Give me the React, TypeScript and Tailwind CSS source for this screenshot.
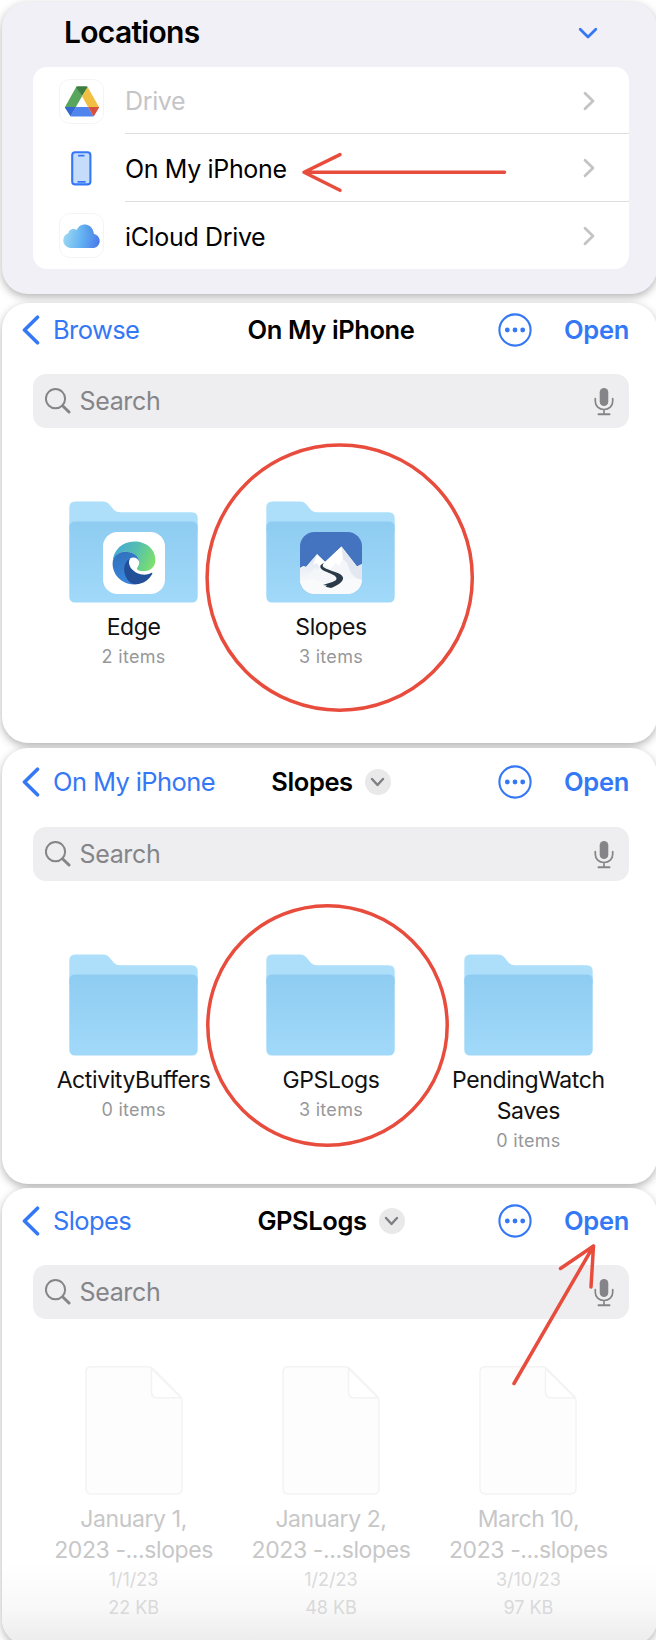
import React from "react";

const RED = "#e84c3d";
const BLUE = "#3478f6";

function BackChevron() {
  return (
    <svg width="18" height="30" viewBox="0 0 18 30" fill="none" stroke={BLUE} strokeWidth="3.6" strokeLinecap="round" strokeLinejoin="round">
      <path d="M15.500 2.200 2.500 15l13 12.800" />
    </svg>
  );
}

function Disclosure() {
  return (
    <svg width="12" height="20" viewBox="0 0 12 20" fill="none" stroke="#c4c4c6" strokeWidth="2.8" strokeLinecap="round" strokeLinejoin="round">
      <path d="M2 2.2 10 10l-8 7.8" />
    </svg>
  );
}

function MoreButton() {
  return (
    <svg width="34" height="34" viewBox="0 0 34 34" fill="none">
      <circle cx="17" cy="17" r="15.6" stroke={BLUE} strokeWidth="2.1" />
      <circle cx="9.3" cy="17" r="2.4" fill={BLUE} />
      <circle cx="17" cy="17" r="2.4" fill={BLUE} />
      <circle cx="24.7" cy="17" r="2.4" fill={BLUE} />
    </svg>
  );
}

function DriveIcon() {
  return (
    <svg width="34" height="31" viewBox="0 0 34 31">
      <path d="M11.6 0.3 17 10.2 5.6 30.2 0 20.9Z" fill="#58a55c" />
      <path d="M11.2 1.2Q11.7 0.3 12.7 0.3H21.3Q22.3 0.3 22.8 1.2L17 10.2Z" fill="#3c7e41" />
      <path d="M22.6 0.9 34 20.9H23.1L17 10.2Z" fill="#f1bf42" />
      <path d="M0 20.9H10.9L5.6 30.2 0.2 21.9Z" fill="#3567d6" />
      <path d="M10.9 20.9H23.1L28.4 30.2Q28 30.6 27.2 30.6H6.8Q6 30.6 5.6 30.2Z" fill="#5085ed" />
      <path d="M23.1 20.9H34Q34 21.7 33.6 22.3L29.4 29.4Q29 30 28.4 30.2Z" fill="#d85040" />
    </svg>
  );
}

function PhoneIcon() {
  return (
    <svg width="21" height="35" viewBox="0 0 21 35">
      <rect x="1.2" y="1.2" width="18.2" height="32.2" rx="3" fill="#c6dcfb" stroke={BLUE} strokeWidth="2.1" />
      <path d="M7.8 4.7h5M7.2 30.8h6.8" stroke={BLUE} strokeWidth="1.7" strokeLinecap="round" />
    </svg>
  );
}

function CloudIcon() {
  return (
    <svg width="37" height="24" viewBox="0 0 37 24">
      <defs>
        <linearGradient id="cloud" x1="0" y1="0.6" x2="1" y2="0.75">
          <stop offset="0" stopColor="#9bd7f3" />
          <stop offset="0.5" stopColor="#62b2f2" />
          <stop offset="1" stopColor="#4a79ea" />
        </linearGradient>
        <linearGradient id="cloudTop" x1="0" y1="0.7" x2="1" y2="0.3">
          <stop offset="0" stopColor="#6bb9f2" stopOpacity="0" />
          <stop offset="1" stopColor="#4a8be2" />
        </linearGradient>
      </defs>
      <path d="M9 24C4 24 0.3 20.8 0.3 16.4c0-3.8 2.1-6.3 5-7.2C5.600 6.600 8 5 10.500 5c1.200 0 2.300.4 3.200.9C15.200 2.500 18 .4 21.400.4c5 0 9 3.900 9.300 9.300C34.200 10.500 36.700 13.200 36.700 16.900 36.700 21 33.600 24 29.500 24Z" fill="url(#cloud)" />
      <path d="M13.700 5.900C15.200 2.500 18 .4 21.400.4c5 0 9 3.900 9.300 9.300-2 5-15 7-17-3.800Z" fill="url(#cloudTop)" opacity=".7" />
    </svg>
  );
}

function EdgeLogo() {
  return (
    <svg width="44" height="44" viewBox="0 0 44 44">
      <defs>
        <linearGradient id="edgeTop" x1="0" y1="0.3" x2="1" y2="0.6">
          <stop offset="0" stopColor="#45a8d8" />
          <stop offset="0.5" stopColor="#55bfae" />
          <stop offset="1" stopColor="#7be06c" />
        </linearGradient>
        <linearGradient id="edgeLeft" x1="0" y1="0" x2="0.4" y2="1">
          <stop offset="0" stopColor="#2f6fba" />
          <stop offset="1" stopColor="#3a86dc" />
        </linearGradient>
      </defs>
      <path d="M0.700 20C1.600 9 10.500 0.600 22.200 0.600 34.500 0.600 43.400 8.600 43.400 18.900c0 6.600-4.900 11.200-11.800 11.200-4 0-6.600-1-6.600-2.700 0-1.400 2.200-2.400 2.200-6C27.200 15 20 10.800 13 10.800 7.500 10.800 3.200 14.500.7 20Z" fill="url(#edgeTop)" />
      <path d="M0.600 22.500C0.600 15.600 6.500 10.800 13.300 10.800c7.500 0 13.600 4.300 13.900 9.800-1.300-2.600-3.300-4-5.900-4-3.600 0-5.600 3-5.600 7.200 0 9 7 16.200 17 15.500C29.800 42 26.300 43.400 22 43.400 10 43.400.6 34 .6 22.500Z" fill="url(#edgeLeft)" />
      <path d="M18.200 17.500C14 19.500 11.800 24.500 12.200 29.500 12.900 37 17.900 43.400 24 43.300c7.300-.3 13-4.700 16.200-10.300.5-1-.2-1.500-1.100-1-3.100 1.600-6.900 2.100-10.500 1.200-6.600-1.600-11.800-6.600-11.600-12.200.1-1.400.5-2.500 1.200-3.500Z" fill="#224f97" />
    </svg>
  );
}

function SlopesLogo() {
  return (
    <svg width="62" height="62" viewBox="0 0 62 62">
      <defs>
        <clipPath id="slopesClip"><rect width="62" height="62" rx="14.500" /></clipPath>
        <linearGradient id="snow" x1="0" y1="0" x2="0" y2="1">
          <stop offset="0" stopColor="#dfe6ef" />
          <stop offset="1" stopColor="#f8fafc" />
        </linearGradient>
      </defs>
      <g clipPath="url(#slopesClip)">
        <rect width="62" height="62" fill="#4473c0" />
        <path d="M0 36 3.500 34 6 35 17 22.300 25 30 41.500 14.500 57 34.500 62 32V62H0Z" fill="#f4f6f9" />
        <path d="M17 22.300 6 35 3.500 34 0 36V52L9 42 15 36 18 38 21 31 25 30Z" fill="url(#snow)" />
        <path d="M17 22.300 13 33 16.500 31 20 35 25 30Z" fill="#fff" />
        <path d="M41.500 14.500 25 30 22 33 30 37 36 31 39 34 43 27Z" fill="#fff" />
        <path d="M41.500 14.500 43 27 47 31 51 41 62 52V32L57 34.500Z" fill="#e3e8f0" />
        <path d="M0 62V50Q10 44 20 49T42 49 62 48V62Z" fill="#f8fafc" />
        <path d="M24 31C19.500 32.500 19 36 23 38.200c5 2.800 12 4 13.500 7.800.5 3-4.500 4-9 5.500L23 53l4 .5-1.500 1.200L31 56C38 53.500 44 49 43 45.500 42 40.500 29 39 24 35.500 22 34 22.500 32.500 24 31Z" fill="#2b3a48" />
      </g>
    </svg>
  );
}

function FolderIcon({ id, children }: { id: string; children?: React.ReactNode }) {
  return (
    <div className="grid h-[102px] w-[129px] place-items-center">
      <svg className="col-start-1 row-start-1" width="129" height="102" viewBox="0 0 129 102">
        <defs>
          <linearGradient id={id} x1="0" y1="0" x2="0" y2="1">
            <stop offset="0" stopColor="#8eccf1" />
            <stop offset="1" stopColor="#a1d9f9" />
          </linearGradient>
        </defs>
        <path d="M0.300 30V6.500Q0.300 0.500 6.300 0.500H34Q38 0.500 40.500 3.500L45 9Q47.500 11.300 51 11.300H122.700Q128.700 11.300 128.700 17.300V30Z" fill="#addffb" />
        <path d="M0.300 26Q0.300 20.500 6.300 20.500H122.700Q128.700 20.500 128.700 26V95.500Q128.700 101.500 122.700 101.500H6.300Q0.300 101.500 0.300 95.500Z" fill={`url(#${id})`} />
      </svg>
      <div className="col-start-1 row-start-1 mt-[21px]">{children}</div>
    </div>
  );
}

function FileIcon() {
  return (
    <svg width="98" height="129" viewBox="0 0 98 129" fill="#fdfdfd" stroke="#f3f3f3" strokeWidth="1.500" strokeLinejoin="round">
      <path d="M6 .8H63Q66 .8 68 2.800L95 30Q97 32 97 35V122.500Q97 128 91.500 128H6.500Q1 128 1 122.500V6.500Q1 .8 6 .8Z" />
      <path d="M66.500 2.500V26Q66.500 31.800 72 31.800H96Z" fill="#fff" />
    </svg>
  );
}

function NavBar({ back, title, menu }: { back: string; title: string; menu?: boolean }) {
  return (
    <header className="grid h-[54px] grid-cols-[1fr_auto_1fr] items-center pr-[28px] pl-[31px] text-[25.500px] leading-none">
      <div className="-ml-[11px] flex items-center gap-[13px] whitespace-nowrap text-[#3478f6]">
        <BackChevron />
        <span className="tracking-[-0.600px]">{back}</span>
      </div>
      <div className="flex items-center gap-[12px] font-semibold tracking-[-0.400px] text-black">
        {title}
        {menu && (
          <span className="grid size-[26px] place-items-center rounded-full bg-[#e9e9ea]">
            <svg width="15" height="10" viewBox="0 0 15 10" fill="none" stroke="#7f7f83" strokeWidth="2.400" strokeLinecap="round" strokeLinejoin="round">
              <path d="m2 2 5.500 6L13 2" />
            </svg>
          </span>
        )}
      </div>
      <div className="flex items-center justify-end gap-[32px] font-semibold tracking-[-0.300px] text-[#3478f6]">
        <MoreButton />
        <span>Open</span>
      </div>
    </header>
  );
}

function SearchField() {
  return (
    <div className="mr-[28px] ml-[31px] flex h-[54px] items-center rounded-[13px] bg-[#eeeef0] pr-[15px] pl-[12px] text-[25px] tracking-[-0.350px] text-[#858589]">
      <svg width="26" height="26" viewBox="0 0 26 26" fill="none" stroke="#858589" strokeLinecap="round">
        <circle cx="10.500" cy="10.700" r="9.600" strokeWidth="2" />
        <path d="m17.800 18 6.200 6" strokeWidth="3" />
      </svg>
      <span className="ml-[8.500px] flex-1 pt-[2px]">Search</span>
      <svg width="20" height="29" viewBox="0 0 20 29" fill="none" stroke="#858589" strokeLinecap="round">
        <rect x="5.700" y="1" width="8.600" height="18" rx="4.300" fill="#858589" stroke="none" />
        <path d="M1.300 11.500v2.700c0 4.700 3.500 8.300 8.700 8.300s8.700-3.600 8.700-8.300v-2.700M10 22.500V27" strokeWidth="1.700" />
        <path d="M4.500 27.200h11" strokeWidth="2" />
      </svg>
    </div>
  );
}

function Folder({ id, name, items, children }: { id: string; name: React.ReactNode; items: string; children?: React.ReactNode }) {
  return (
    <div className="flex flex-col items-center text-center">
      <FolderIcon id={id}>{children}</FolderIcon>
      <div className="mt-[9px] text-[23px] leading-[31px] tracking-[-0.400px] whitespace-nowrap text-[#111]">{name}</div>
      <div className="text-[18px] leading-[28px] tracking-[0.300px] text-[#97979a]">{items}</div>
    </div>
  );
}

function FileItem({ first, date, size }: { first: string; date: string; size: string }) {
  return (
    <div className="flex flex-col items-center text-center">
      <FileIcon />
      <div className="mt-[9px] text-[23px] leading-[31px] tracking-[-0.400px] whitespace-nowrap text-[#c7c7c8]">
        {first}
        <br />
        2023 -...slopes
      </div>
      <div className="text-[18px] leading-[28px] text-[#d9d9da]">
        {date}
        <br />
        {size}
      </div>
    </div>
  );
}

function LocationRow({ icon, label, muted, boxed, last }: { icon: React.ReactNode; label: string; muted?: boolean; boxed?: boolean; last?: boolean }) {
  return (
    <li className="flex h-[67.330px] pl-[26px]">
      <div className="flex items-center pt-px">
        <div className={boxed ? "grid size-[45px] place-items-center rounded-[11px] border border-[#f4f4f5]" : "grid size-[45px] place-items-center"}>{icon}</div>
      </div>
      <div className={last ? "ml-[21px] flex flex-1 items-center justify-between pr-[34px]" : "ml-[21px] flex flex-1 items-center justify-between border-b border-[#dfdfe1] pr-[34px]"}>
        <span className={muted ? "pt-[4px] text-[#c5c5c7]" : "pt-[4px] text-black"}>{label}</span>
        <span className="pt-[2px]"><Disclosure /></span>
      </div>
    </li>
  );
}

const CARD = "relative w-[655px] shrink-0 rounded-[26px] shadow-[0_3px_8px_rgba(0,0,0,0.3)]";

export default function App() {
  return (
    <main className="relative flex h-[1640px] w-[656px] flex-col overflow-hidden bg-white pt-[2px] pl-[2px] font-['Inter',sans-serif]">
      <section className={`${CARD} h-[292px] bg-[#f1f0f6]`}>
        <div className="flex h-[65px] items-center justify-between pr-[59px] pb-[5px] pl-[62px]">
          <h2 className="text-[30px] leading-none font-semibold tracking-[-0.700px] text-black">Locations</h2>
          <svg className="mt-[3px]" width="20" height="13" viewBox="0 0 20 13" fill="none" stroke={BLUE} strokeWidth="2.800" strokeLinecap="round" strokeLinejoin="round">
            <path d="m2.200 2.300 7.800 7.700 7.800-7.700" />
          </svg>
        </div>
        <ul className="mr-[28px] ml-[31px] overflow-hidden rounded-[14px] bg-white text-[25px] tracking-[-0.350px]">
          <LocationRow icon={<DriveIcon />} label="Drive" muted boxed />
          <LocationRow icon={<PhoneIcon />} label="On My iPhone" />
          <LocationRow icon={<CloudIcon />} label="iCloud Drive" boxed last />
        </ul>
        <svg className="absolute top-[148px] left-[297px]" width="212" height="44" viewBox="0 0 212 44" fill="none" stroke={RED} strokeWidth="3.500" strokeLinecap="round" strokeLinejoin="round">
          <path d="M205.500 22.300H5M41 4.600 5 22.300 41 40.300" />
        </svg>
      </section>

      <section className={`${CARD} mt-[9px] h-[440px] bg-white`}>
        <NavBar back="Browse" title="On My iPhone" />
        <div className="h-[17px]" />
        <SearchField />
        <div className="mt-[73px] grid grid-cols-[repeat(3,197.400px)] justify-center pl-[3px]">
          <Folder id="f1" name="Edge" items="2 items">
            <div className="grid size-[62px] place-items-center rounded-[14.500px] bg-white"><EdgeLogo /></div>
          </Folder>
          <Folder id="f2" name="Slopes" items="3 items"><SlopesLogo /></Folder>
        </div>
        <svg className="absolute top-[140px] left-[203px]" width="270" height="270" viewBox="0 0 270 270">
          <circle cx="134.700" cy="134.700" r="132.600" fill="none" stroke={RED} strokeWidth="3.500" />
        </svg>
      </section>

      <section className={`${CARD} mt-[5px] h-[436px] bg-white pt-[7px]`}>
        <NavBar back="On My iPhone" title="Slopes" menu />
        <div className="h-[18px]" />
        <SearchField />
        <div className="mt-[73px] grid grid-cols-[repeat(3,197.400px)] justify-center pl-[3px]">
          <Folder id="f3" name="ActivityBuffers" items="0 items" />
          <Folder id="f4" name="GPSLogs" items="3 items" />
          <Folder id="f5" name={<>PendingWatch<br />Saves</>} items="0 items" />
        </div>
        <svg className="absolute top-[156px] left-[204px]" width="244" height="244" viewBox="0 0 244 244">
          <circle cx="121.500" cy="121.500" r="119.700" fill="none" stroke={RED} strokeWidth="3.500" />
        </svg>
      </section>

      <section className={`${CARD} mt-[4px] h-[457px] bg-linear-to-b from-white from-82% via-[#f8f8f8] via-92% to-[#ebebeb] pt-[6px]`}>
        <NavBar back="Slopes" title="GPSLogs" menu />
        <div className="h-[17px]" />
        <SearchField />
        <div className="mt-[47px] grid grid-cols-[repeat(3,197.400px)] justify-center pl-[3px]">
          <FileItem first="January 1," date="1/1/23" size="22 KB" />
          <FileItem first="January 2," date="1/2/23" size="48 KB" />
          <FileItem first="March 10," date="3/10/23" size="97 KB" />
        </div>
        <svg className="absolute top-[52px] left-[506px]" width="92" height="150" viewBox="0 0 92 150" fill="none" stroke={RED} strokeWidth="3.500" strokeLinecap="round" strokeLinejoin="round">
          <path d="M6 143.500 85.500 6M52.500 28.500 85.500 6 83 47" />
        </svg>
      </section>
    </main>
  );
}
